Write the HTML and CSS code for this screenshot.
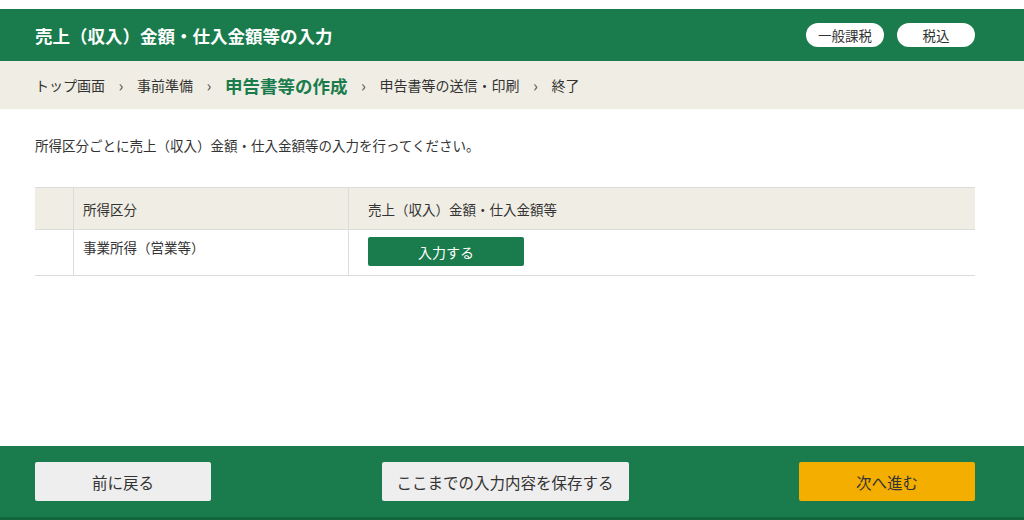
FILE: index.html
```html
<!DOCTYPE html>
<html lang="ja">
<head>
    <meta charset="UTF-8">
    <title>売上（収入）金額・仕入金額等の入力</title>
    <link rel="stylesheet" href="styles.css">
</head>
<body>
    <header class="page-head">
        <h1>売上（収入）金額・仕入金額等の入力</h1>
        <div class="badges">
            <span class="badge">一般課税</span>
            <span class="badge">税込</span>
        </div>
    </header>

    <nav class="crumbs">
        <span>トップ画面</span>
        <span class="sep">›</span>
        <span>事前準備</span>
        <span class="sep">›</span>
        <span class="current">申告書等の作成</span>
        <span class="sep">›</span>
        <span>申告書等の送信・印刷</span>
        <span class="sep">›</span>
        <span>終了</span>
    </nav>

    <main class="content">
        <p class="lead">所得区分ごとに売上（収入）金額・仕入金額等の入力を行ってください。</p>

        <table class="entry-table">
            <thead>
                <tr>
                    <th class="col-no"></th>
                    <th class="col-kind">所得区分</th>
                    <th class="col-amount">売上（収入）金額・仕入金額等</th>
                </tr>
            </thead>
            <tbody>
                <tr>
                    <td class="col-no"></td>
                    <td class="col-kind">事業所得（営業等）</td>
                    <td class="col-amount"><button class="btn-input">入力する</button></td>
                </tr>
            </tbody>
        </table>
    </main>

    <footer class="page-foot">
        <button class="btn btn-back">前に戻る</button>
        <button class="btn btn-save">ここまでの入力内容を保存する</button>
        <button class="btn btn-next">次へ進む</button>
    </footer>
</body>
</html>
```

FILE: styles.css
```css
html, body {
    height: 100%;
}

body {
    margin: 0;
    padding-top: 9px;
    box-sizing: border-box;
    display: flex;
    flex-direction: column;
    font-family: "Noto Sans CJK JP", "Noto Sans", sans-serif;
    color: #333;
    background-color: #fff;
}

.page-head {
    height: 52px;
    background-color: #1a7c4c;
    display: flex;
    align-items: center;
    justify-content: space-between;
    padding: 0 49px 0 35px;
}

.page-head h1 {
    margin: 0;
    font-size: 17.5px;
    font-weight: bold;
    color: #fff;
}

.badges {
    display: flex;
    gap: 13px;
}

.badge {
    width: 78px;
    height: 24px;
    line-height: 24px;
    text-align: center;
    background-color: #fff;
    border-radius: 12px;
    font-size: 13.5px;
    color: #333;
}

.crumbs {
    height: 48px;
    background-color: #f0eee4;
    display: flex;
    align-items: center;
    gap: 12px;
    padding-left: 35px;
    font-size: 14px;
    color: #333;
}

.crumbs .sep {
    width: 8px;
    text-align: center;
    font-size: 16px;
    color: #555;
}

.crumbs .current {
    font-size: 17.5px;
    font-weight: bold;
    color: #1a7c4c;
}

.content {
    padding: 0 49px 0 35px;
}

.lead {
    margin: 26px 0 0;
    font-size: 13.5px;
    line-height: 20px;
}

.entry-table {
    width: 100%;
    margin-top: 32px;
    border-collapse: collapse;
    font-size: 13.5px;
}

.entry-table th,
.entry-table td {
    padding: 0;
    text-align: left;
    font-weight: normal;
    vertical-align: top;
    border-top: 1px solid #dcdcdc;
    border-bottom: 1px solid #dcdcdc;
}

.entry-table th {
    height: 41px;
    vertical-align: middle;
    background-color: #f0eee4;
}

.entry-table td {
    height: 46px;
    box-sizing: border-box;
}

.col-no {
    width: 38px;
    border-right: 1px solid #dcdcdc;
}

.entry-table .col-kind {
    width: 265px;
    padding-left: 9px;
    border-right: 1px solid #dcdcdc;
}

.entry-table td.col-kind {
    padding-top: 7px;
}

.entry-table .col-amount {
    padding-left: 19px;
}

.entry-table td.col-amount {
    padding-top: 7px;
}

.btn-input {
    display: block;
    width: 156px;
    height: 29px;
    border: none;
    border-radius: 2px;
    background-color: #1a7c4c;
    color: #fff;
    font-family: inherit;
    font-size: 14px;
}

.page-foot {
    margin-top: auto;
    height: 55px;
    background-color: #1a7c4c;
    border-bottom: 3px solid #11663c;
    display: flex;
    align-items: flex-start;
    justify-content: space-between;
    padding: 16px 49px 0 35px;
}

.btn {
    height: 39px;
    border: none;
    border-radius: 2px;
    background-color: #eeeeee;
    color: #333;
    font-family: inherit;
    font-size: 15.5px;
}

.btn-back,
.btn-next {
    width: 176px;
}

.btn-save {
    width: 247px;
}

.btn-next {
    background-color: #f3ae00;
}
```
